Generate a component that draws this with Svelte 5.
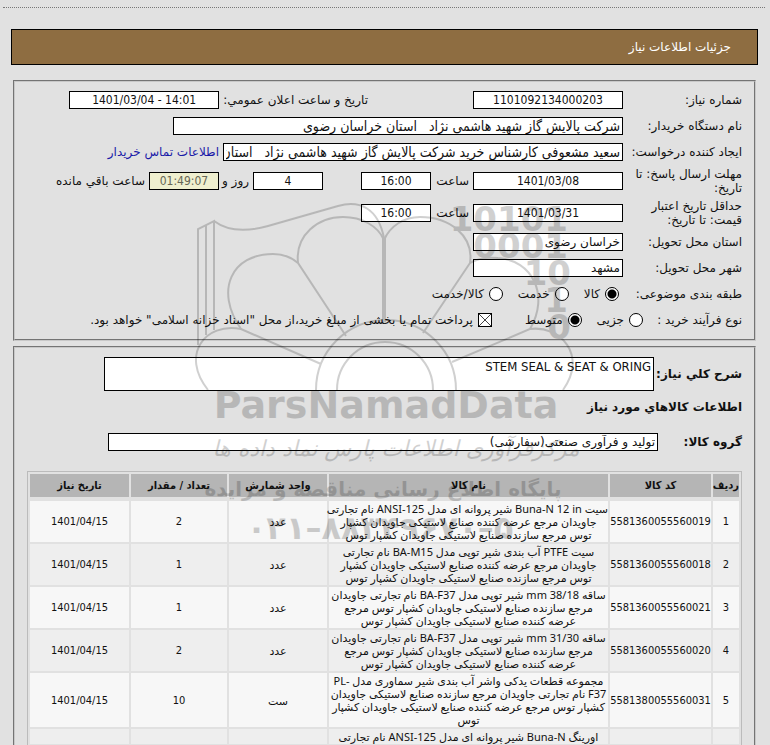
<script lang="ts">
  interface Item {
    code: string;
    lines: string[];
    unit: string;
    count: string;
    date: string;
  }

  const items: Item[] = [
    {
      code: "5581360055560019",
      lines: [
        "سیت Buna-N 12 in شیر پروانه ای مدل ANSI-125 نام تجارتی",
        "جاویدان مرجع عرضه کننده صنایع لاستیکی جاویدان کشپار",
        "توس مرجع سازنده صنایع لاستیکی جاویدان کشپار توس",
      ],
      unit: "عدد",
      count: "2",
      date: "1401/04/15",
    },
    {
      code: "5581360055560018",
      lines: [
        "سیت PTFE آب بندی شیر توپی مدل BA-M15 نام تجارتی",
        "جاویدان مرجع عرضه کننده صنایع لاستیکی جاویدان کشپار",
        "توس مرجع سازنده صنایع لاستیکی جاویدان کشپار توس",
      ],
      unit: "عدد",
      count: "1",
      date: "1401/04/15",
    },
    {
      code: "5581360055560021",
      lines: [
        "ساقه mm 38/18 شیر توپی مدل BA-F37 نام تجارتی جاویدان",
        "مرجع سازنده صنایع لاستیکی جاویدان کشپار توس مرجع",
        "عرضه کننده صنایع لاستیکی جاویدان کشپار توس",
      ],
      unit: "عدد",
      count: "1",
      date: "1401/04/15",
    },
    {
      code: "5581360055560020",
      lines: [
        "ساقه mm 31/30 شیر توپی مدل BA-F37 نام تجارتی جاویدان",
        "مرجع سازنده صنایع لاستیکی جاویدان کشپار توس مرجع",
        "عرضه کننده صنایع لاستیکی جاویدان کشپار توس",
      ],
      unit: "عدد",
      count: "2",
      date: "1401/04/15",
    },
    {
      code: "5581380055560031",
      lines: [
        "مجموعه قطعات یدکی واشر آب بندی شیر سماوری مدل PL-\u200e",
        "F37 نام تجارتی جاویدان مرجع سازنده صنایع لاستیکی جاویدان",
        "کشپار توس مرجع عرضه کننده صنایع لاستیکی جاویدان کشپار",
        "توس",
      ],
      unit: "ست",
      count: "10",
      date: "1401/04/15",
    },
    {
      code: "",
      lines: ["اورینگ Buna-N شیر پروانه ای مدل ANSI-125 نام تجارتی"],
      unit: "",
      count: "",
      date: "",
    },
  ];

  const subjects = ["کالا", "خدمت", "کالا/خدمت"];
  const processes = ["جزیی", "متوسط"];

  let subject = "کالا";
  let process = "متوسط";
  let treasury = true;
</script>

<div class="page" dir="rtl">
  <hr class="dotted" />
  <h1 class="title">جزئیات اطلاعات نیاز</h1>

  <div class="panel">
    <div class="row">
      <div class="half">
        <label class="label" for="number">شماره نیاز:</label>
        <input class="box num date" id="number" readonly value="1101092134000203" />
      </div>
      <label for="announced">تاریخ و ساعت اعلان عمومي:</label>
      <input class="box num date" id="announced" readonly value="1401/03/04 - 14:01" />
    </div>
    <div class="row">
      <label class="label" for="buyer">نام دستگاه خریدار:</label>
      <input
        class="box buyer"
        id="buyer"
        readonly
        value="شرکت پالایش گاز شهید هاشمی نژاد   استان خراسان رضوی"
      />
    </div>
    <div class="row">
      <label class="label" for="creator">ایجاد کننده درخواست:</label>
      <input
        class="box creator"
        id="creator"
        readonly
        value="سعید مشعوفی کارشناس خرید شرکت پالایش گاز شهید هاشمی نژاد   استان خراسان رضوی"
      />
      <a href="#contact">اطلاعات تماس خریدار</a>
    </div>
    <div class="row tall">
      <label class="label" for="reply-date">مهلت ارسال پاسخ: تا تاریخ:</label>
      <input class="box num date" id="reply-date" readonly value="1401/03/08" />
      <label class="hour" for="reply-time">ساعت</label>
      <input class="box num time" id="reply-time" readonly value="16:00" />
      <input class="box num time days" id="days" readonly value="4" />
      <label class="and" for="days">روز و</label>
      <input class="box num time left" id="left" readonly value="01:49:07" />
      <label for="left">ساعت باقي مانده</label>
    </div>
    <div class="row tall">
      <label class="label narrow" for="valid-date">حداقل تاریخ اعتبار قیمت: تا تاریخ:</label>
      <input class="box num date" id="valid-date" readonly value="1401/03/31" />
      <label class="hour" for="valid-time">ساعت</label>
      <input class="box num time" id="valid-time" readonly value="16:00" />
    </div>
    <div class="row">
      <label class="label" for="province">استان محل تحویل:</label>
      <input class="box date" id="province" readonly value="خراسان رضوی" />
    </div>
    <div class="row">
      <label class="label" for="city">شهر محل تحویل:</label>
      <input class="box date" id="city" readonly value="مشهد" />
    </div>
    <div class="row" role="radiogroup" aria-labelledby="subject-label">
      <span class="label wide" id="subject-label">طبقه بندی موضوعی:</span>
      <div class="options">
        {#each subjects as name}
          <label class="option">
            <input type="radio" bind:group={subject} value={name} />
            {name}
          </label>
        {/each}
      </div>
    </div>
    <div class="row" role="radiogroup" aria-labelledby="process-label">
      <span class="label short" id="process-label">نوع فرآیند خرید :</span>
      <div class="options">
        {#each processes as name}
          <label class="option">
            <input type="radio" bind:group={process} value={name} />
            {name}
          </label>
        {/each}
      </div>
      <label class="option treasury">
        <input type="checkbox" bind:checked={treasury} />
        پرداخت تمام یا بخشی از مبلغ خرید،از محل "اسناد خزانه اسلامی" خواهد بود.
      </label>
    </div>
  </div>

  <div class="panel goods">
    <div class="row summary">
      <label class="bold" for="summary">شرح کلي نیاز:</label>
      <textarea class="box" id="summary" readonly>STEM SEAL & SEAT & ORING</textarea>
    </div>
    <h2 class="bold">اطلاعات کالاهاي مورد نیاز</h2>
    <div class="row group">
      <label class="bold" for="group">گروه کالا:</label>
      <input class="box" id="group" readonly value="تولید و فرآوری صنعتی(سفارشی)" />
    </div>

    <table>
      <thead>
        <tr>
          <th class="c-row">ردیف</th>
          <th class="c-code">کد کالا</th>
          <th>نام کالا</th>
          <th class="c-unit">واحد شمارش</th>
          <th class="c-count">تعداد / مقدار</th>
          <th class="c-date">تاریخ نیاز</th>
        </tr>
      </thead>
      <tbody>
        {#each items as item, i}
          <tr>
            <td>{item.code ? i + 1 : ""}</td>
            <td>{item.code}</td>
            <td class="name">
              {#each item.lines as line}
                <span class="line">{line}</span>
              {/each}
            </td>
            <td class="name">{item.unit}</td>
            <td>{item.count}</td>
            <td>{item.date}</td>
          </tr>
        {/each}
      </tbody>
    </table>
  </div>

  <svg class="watermark" width="400" height="350" viewBox="190 200 400 350" aria-hidden="true">
    <g fill="none" stroke="#000" stroke-width="2">
      <path d="M198 345V229L214 221V330M206 335V225" />
      <path d="M214 221C230 233 250 231 268 226L338 206C360 200 378 208 384 238" />
      <path d="M384 238V322" stroke-width="4" />
      <path d="M241 329C214 290 232 254 273 254C282 254 291 257 298 263L346 336" />
      <path d="M298 263C295 235 318 217 343 217C362 217 378 226 384 240" />
      <path d="M384 240C390 226 404 217 420 217C450 217 474 236 470 263L423 333" />
      <path d="M470 263C478 258 488 257 498 258C532 260 550 295 530 329L452 362" />
      <path d="M530 329C560 325 588 355 563 390" />
      <path d="M208 390C180 355 205 322 241 329L321 364" />
      <path d="M316 390A70 70 0 0 1 456 390" />
      <path d="M337 390A48 48 0 0 1 433 390" />
    </g>
    <g class="bits">
      <text x="568" y="231">10101</text>
      <text x="568" y="258">0001</text>
      <text x="571" y="285">10</text>
      <text x="568" y="312">1</text>
      <text x="571" y="339">0</text>
    </g>
    <text class="brand" x="386" y="418">ParsNamadData</text>
    <text class="script" x="396" y="456">مرکزفرآوری اطلاعات پارس نماد داده ها</text>
    <text class="slogan" x="383" y="496">پایگاه اطلاع رسانی مناقصه و مزایده</text>
    <text class="phone" x="380" y="539">&#x202d;۰۲۱–۸۸۳۴۹۶۷۰–۵</text>
  </svg>
</div>

<style>
  :global(body) {
    background: #e1e1e1;
    height: 100vh;
    overflow: hidden;
  }
  .page {
    position: relative;
    padding: 7px 12px 0 11px;
    font-family: "DejaVu Sans", sans-serif;
    font-size: 12px;
    line-height: 14px;
    color: #111;
  }
  .dotted {
    margin: 0 -7px 21px -8px;
    border: 0;
    border-top: 1px dotted #777;
  }
  .title {
    margin: 0 0 15px;
    padding: 10px 26px;
    border: 1px solid #000;
    background: #8e6d41;
    color: #fff;
    font-size: 12px;
    font-weight: 400;
    line-height: 14px;
  }
  .panel {
    margin: 0 2px 5px;
    padding: 5px 12px 6px 11px;
    border: 2px groove #c8c8c8;
  }
  .row {
    display: flex;
    align-items: center;
    gap: 4px;
    height: 26px;
    white-space: nowrap;
  }
  .row.tall {
    height: 32px;
  }
  .half {
    display: flex;
    align-items: center;
    width: 370px;
    gap: 4px;
  }
  .label {
    width: 115px;
    flex-shrink: 0;
  }
  .tall .label {
    white-space: normal;
  }
  .label.narrow {
    box-sizing: border-box;
    padding-left: 16px;
  }
  .label.wide {
    width: 119px;
  }
  .label.short {
    width: 95px;
  }
  .box {
    box-sizing: border-box;
    height: 18px;
    margin: 0;
    padding: 0 2px;
    border: 1px solid #000;
    border-radius: 0;
    background: #fff;
    color: #111;
    font-family: "DejaVu Sans", sans-serif;
    font-size: 12px;
    outline: none;
  }
  .num {
    direction: ltr;
    font-family: "DejaVu Sans Condensed", sans-serif;
    text-align: center;
  }
  .date {
    width: 150px;
  }
  .time {
    width: 70px;
  }
  .buyer,
  .creator {
    width: 450px;
    font-family: "DejaVu Sans Condensed", sans-serif;
    font-size: 14px;
  }
  .creator {
    width: 400px;
  }
  .hour {
    width: 34px;
  }
  .days {
    margin-right: 34px;
  }
  .and {
    width: 26px;
  }
  .left {
    background: #efefcf;
    color: #665;
  }
  a {
    color: #1a1aa8;
    text-decoration: none;
  }
  .options {
    display: flex;
    gap: 15px;
  }
  .option {
    display: flex;
    align-items: center;
    gap: 5px;
  }
  .treasury {
    margin-right: 29px;
  }
  input[type="radio"],
  input[type="checkbox"] {
    appearance: none;
    box-sizing: border-box;
    width: 14px;
    height: 14px;
    margin: 0;
    border: 1px solid #000;
    background: #fff;
  }
  input[type="radio"] {
    border-radius: 50%;
  }
  input[type="radio"]:checked {
    background: radial-gradient(circle, #000 4px, #fff 5px);
  }
  input[type="checkbox"]:checked {
    background:
      linear-gradient(45deg, transparent 47%, #444 47%, #444 53%, transparent 53%),
      linear-gradient(-45deg, #fff 47%, #444 47%, #444 53%, #fff 53%);
  }
  .goods {
    padding-top: 9px;
  }
  .bold {
    margin: 0;
    font-size: 12px;
    font-weight: 700;
  }
  .summary {
    height: 34px;
  }
  .summary .bold {
    width: 84px;
  }
  textarea.box {
    flex: 0 1 550px;
    height: 34px;
    line-height: 18px;
    font-family: "DejaVu Sans Condensed", sans-serif;
    font-size: 13px;
    resize: none;
    overflow: hidden;
  }
  h2.bold {
    padding: 9px 0;
  }
  .group {
    height: 38px;
  }
  .group .bold {
    width: 80px;
  }
  .group .box {
    flex: 0 1 550px;
  }
  table {
    width: calc(100% - 1px);
    margin-top: 10px;
    border: 1px solid #bbb;
    border-spacing: 2px;
    table-layout: fixed;
    background: #e1e1e1;
    font-family: "DejaVu Sans Condensed", sans-serif;
    font-size: 11px;
    line-height: 13px;
    text-align: center;
    white-space: nowrap;
  }
  th {
    height: 23px;
    padding: 0;
    background: #b5b5b5;
  }
  td {
    padding: 1px 0;
    background: #f7f7f7;
  }
  tbody tr:nth-child(even) td {
    background: #eee;
  }
  tbody tr:first-child td {
    border-top: 2px solid #e1e1e1;
  }
  .name {
    font-family: "Noto Sans", "DejaVu Sans", sans-serif;
  }
  .line {
    display: block;
  }
  .c-row {
    width: 26px;
  }
  .c-code {
    width: 101px;
  }
  .c-unit {
    width: 98px;
  }
  .c-count {
    width: 96px;
  }
  .c-date {
    width: 99px;
  }
  .watermark {
    position: absolute;
    top: 200px;
    left: 190px;
    opacity: 0.18;
    pointer-events: none;
  }
  .watermark text {
    direction: ltr;
    font-weight: 700;
    text-anchor: middle;
  }
  .watermark .bits text {
    font-size: 34px;
    text-anchor: end;
  }
  .watermark .brand {
    font-size: 38px;
  }
  .watermark .script {
    font-size: 22px;
    font-style: italic;
    font-weight: 400;
  }
  .watermark .slogan {
    font-size: 20px;
  }
  .watermark .phone {
    font-size: 32px;
  }
</style>
